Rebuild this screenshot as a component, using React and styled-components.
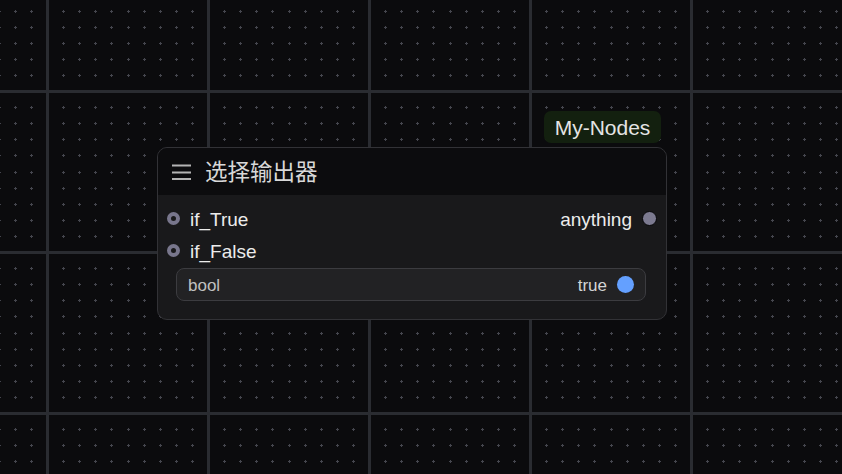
import React from "react";
import styled, { createGlobalStyle } from "styled-components";

const Global = createGlobalStyle`
  html, body { margin: 0; padding: 0; background: #0b0b0d; }
  body { font-family: "Liberation Sans", Arial, sans-serif; }
`;

const Canvas = styled.div`
  position: relative;
  width: 842px;
  height: 474px;
  overflow: hidden;
  background: #0b0b0d;
`;

const GridSvg = styled.svg`
  display: block;
`;

const Node = styled.div`
  position: absolute;
  left: 157px;
  top: 147px;
  width: 510px;
  box-sizing: border-box;
  border: 1px solid #323236;
  border-radius: 10px;
  overflow: hidden;
  background: #19191b;
  display: flex;
  flex-direction: column;
`;

const Header = styled.div`
  height: 47px;
  background: #0c0c0e;
  display: flex;
  align-items: center;
  gap: 14px;
  padding-left: 14px;
`;

const Title = styled.span`
  font-family: "Noto Sans CJK SC", "Noto Sans", sans-serif;
  font-size: 22.5px;
  color: #d8d8d8;
  line-height: 1;
  margin-top: -3px;
`;

const Body = styled.div`
  display: flex;
  flex-direction: column;
  padding: 7px 9px 18px 9px;
`;

const SlotRow = styled.div`
  height: 32px;
  display: flex;
  align-items: center;
  justify-content: space-between;
`;

const Slot = styled.div`
  display: flex;
  align-items: center;
  gap: ${(p) => p.$gap}px;
`;

const Label = styled.span`
  font-size: 19px;
  color: #ececec;
  line-height: 1;
  padding-top: 2px;
`;

const InputDot = styled.span`
  width: 13px;
  height: 13px;
  box-sizing: border-box;
  border-radius: 50%;
  border: 4.5px solid #78768c;
  background: #19191b;
`;

const OutputDot = styled.span`
  width: 15px;
  height: 15px;
  box-sizing: border-box;
  border-radius: 50%;
  border: 1.5px solid #050507;
  background: #7c7a90;
`;

const Widget = styled.div`
  margin: 2px 11px 0 9px;
  height: 33px;
  box-sizing: border-box;
  border: 1px solid #3c3c40;
  border-radius: 8px;
  background: #222224;
  display: flex;
  align-items: center;
  justify-content: space-between;
  padding: 2px 11px 0 11px;
`;

const WidgetName = styled.span`
  font-size: 17px;
  color: #c0c0c0;
  line-height: 1;
`;

const WidgetValue = styled.div`
  display: flex;
  align-items: center;
  gap: 10px;
  font-size: 17px;
  color: #d4d4d4;
  line-height: 1;
`;

const Toggle = styled.span`
  width: 17px;
  height: 17px;
  margin-top: -2px;
  border-radius: 50%;
  background: #64a0ff;
`;

const Badge = styled.div`
  position: absolute;
  left: 544px;
  top: 111px;
  width: 117px;
  height: 32px;
  border-radius: 7px;
  background: #13200f;
  display: flex;
  align-items: center;
  justify-content: center;
  font-size: 21px;
  color: #e4e4e4;
  line-height: 1;
`;

function Grid() {
  const step = 16.1;
  const ox = 47.5;
  const oy = 91.5;
  let d = "";
  for (let i = -3; i < 53; i++) {
    if (i % 10 === 0) continue;
    const x = Math.round(ox + step * i - 0.5);
    if (x < -2 || x > 845) continue;
    for (let j = -6; j < 25; j++) {
      if (j % 10 === 0) continue;
      const y = Math.round(oy + step * j - 0.5);
      if (y < -2 || y > 477) continue;
      d += `M${x - 1} ${y}h3v1h-3zM${x} ${y - 1}h1v3h-1z`;
    }
  }
  const vLines = [];
  for (let k = -1; k < 6; k++) {
    const x = Math.round(ox + 161 * k - 1.5);
    vLines.push(<rect key={"v" + k} x={x} y={0} width={3} height={474} fill="#2a2c31" />);
  }
  const hLines = [];
  for (let k = -1; k < 4; k++) {
    const y = Math.round(oy + 161 * k - 1.5);
    hLines.push(<rect key={"h" + k} x={0} y={y} width={842} height={3} fill="#2a2c31" />);
  }
  return (
    <GridSvg width="842" height="474" viewBox="0 0 842 474" shapeRendering="crispEdges">
      <rect width="842" height="474" fill="#0b0b0d" />
      <path d={d} fill="#45464e" />
      {vLines}
      {hLines}
    </GridSvg>
  );
}

function MenuIcon() {
  return (
    <svg width="19" height="16" viewBox="0 0 19 16">
      <rect x="0" y="0.5" width="19" height="2" fill="#b4b4b4" />
      <rect x="0" y="7.5" width="19" height="2" fill="#b4b4b4" />
      <rect x="0" y="14" width="19" height="2" fill="#b4b4b4" />
    </svg>
  );
}

export default function App() {
  return (
    <>
      <Global />
      <Canvas>
        <Grid />
        <Badge>My-Nodes</Badge>
        <Node>
          <Header>
            <MenuIcon />
            <Title>选择输出器</Title>
          </Header>
          <Body>
            <SlotRow>
              <Slot $gap={10}>
                <InputDot />
                <Label>if_True</Label>
              </Slot>
              <Slot $gap={10}>
                <Label>anything</Label>
                <OutputDot />
              </Slot>
            </SlotRow>
            <SlotRow>
              <Slot $gap={10}>
                <InputDot />
                <Label>if_False</Label>
              </Slot>
            </SlotRow>
            <Widget>
              <WidgetName>bool</WidgetName>
              <WidgetValue>
                true
                <Toggle />
              </WidgetValue>
            </Widget>
          </Body>
        </Node>
      </Canvas>
    </>
  );
}
